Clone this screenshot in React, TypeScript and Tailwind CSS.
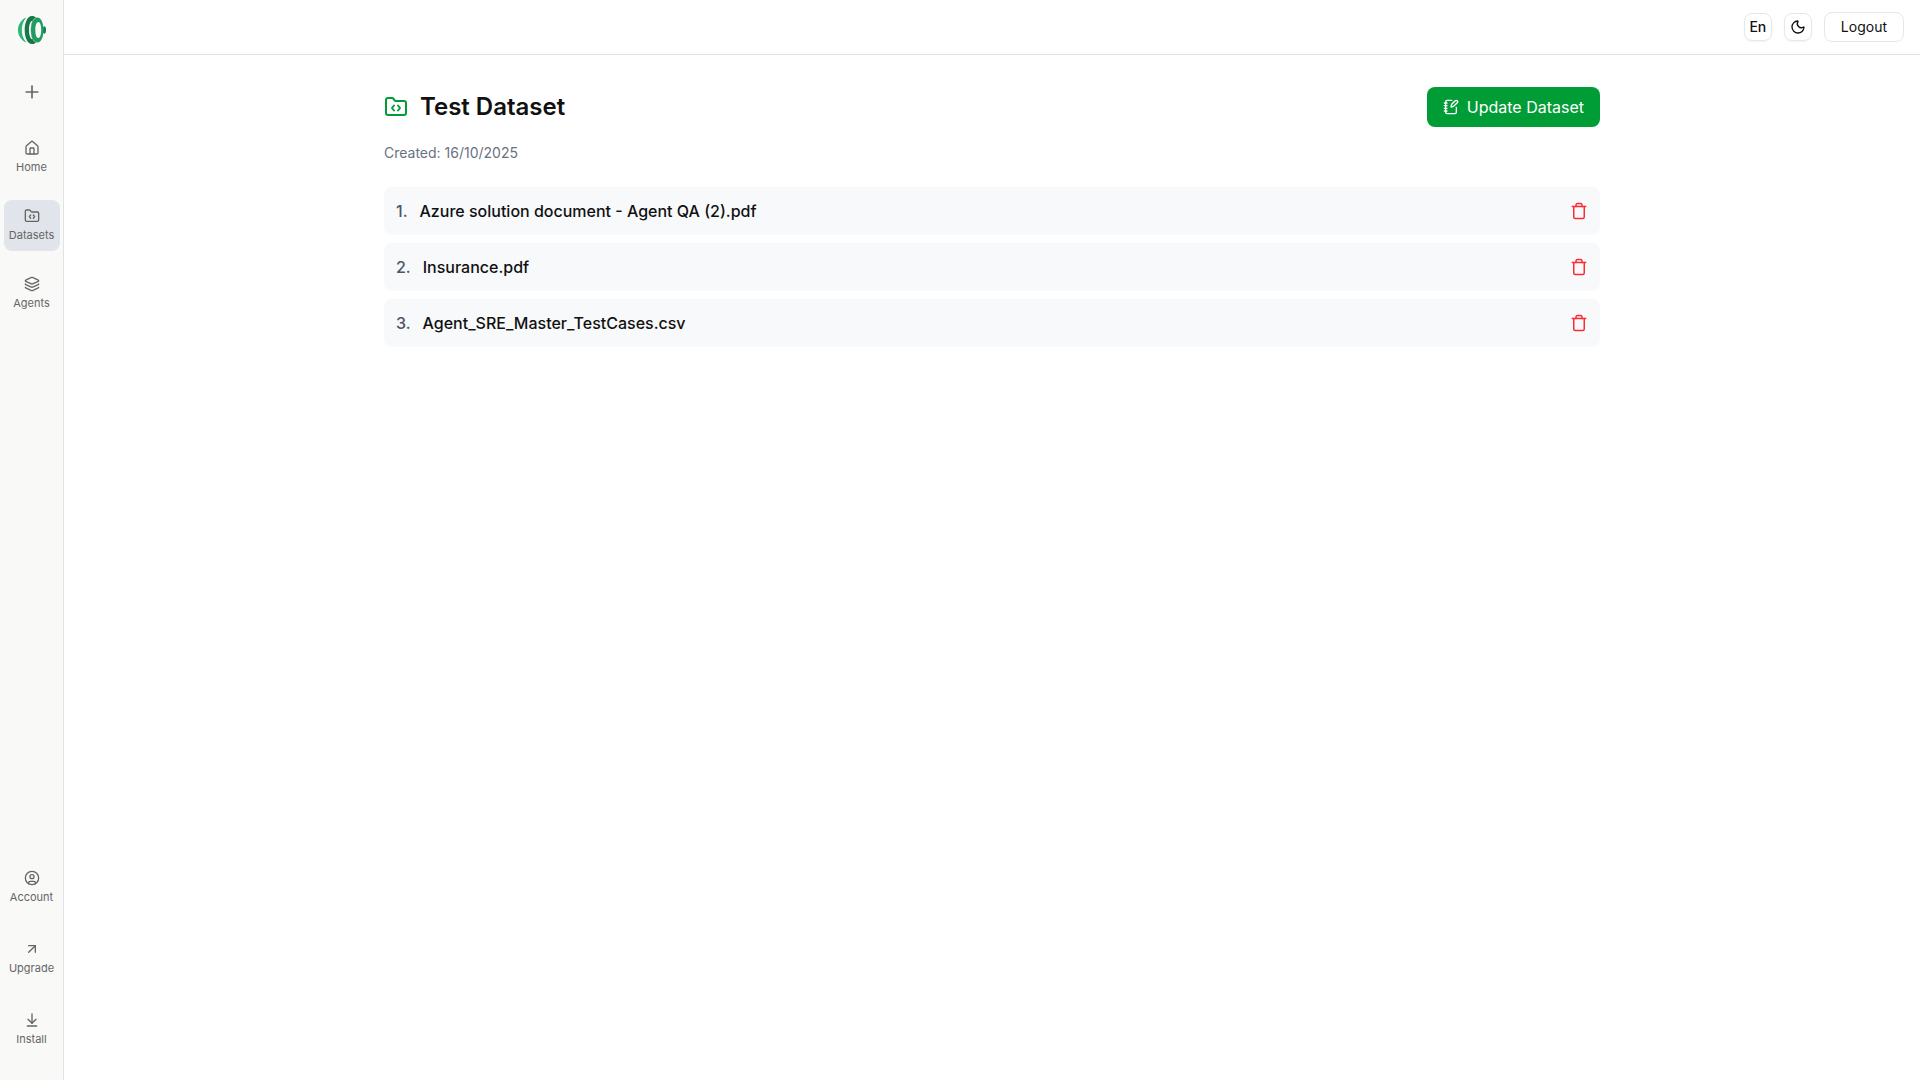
import React from 'react';
import {
  ArrowDownToLine,
  ArrowUpRight,
  CircleUser,
  FolderCode,
  House,
  Layers,
  Moon,
  NotebookPen,
  Plus,
  Trash,
  type LucideIcon,
} from 'lucide-react';

interface NavItem {
  label: string;
  icon: LucideIcon;
  active?: boolean;
}

const mainNav: NavItem[] = [
  { label: 'Home', icon: House },
  { label: 'Datasets', icon: FolderCode, active: true },
  { label: 'Agents', icon: Layers },
];

const bottomNav: NavItem[] = [
  { label: 'Account', icon: CircleUser },
  { label: 'Upgrade', icon: ArrowUpRight },
  { label: 'Install', icon: ArrowDownToLine },
];

const files = [
  'Azure solution document - Agent QA (2).pdf',
  'Insurance.pdf',
  'Agent_SRE_Master_TestCases.csv',
];

const Logo: React.FC = () => (
  <svg viewBox="0 0 28 28" className="w-7 h-7" aria-hidden="true">
    <path d="M8.5 1.2C3.6 3.4 0 8 0 14s3.6 10.6 8.5 12.8C5.2 23 3.8 18.8 3.8 14S5.2 5 8.500 1.200Z" fill="#2bb673" />
    <ellipse cx="26.4" cy="14" rx="1.6" ry="3.8" fill="#17804f" />
    <path
      fillRule="evenodd"
      d="M19.5 1.5c3.800 0 6 5.600 6 12.500s-2.200 12.500-6 12.500-6.500-5.600-6.500-12.500 2.700-12.500 6.500-12.500Zm.8 4.500c-1.800 0-3 3.500-3 8s1.200 8 3 8 2.900-3.500 2.900-8-1.100-8-2.900-8Z"
      fill="#1f9d60"
    />
    <path
      fillRule="evenodd"
      d="M14 0c1.500 0 2.800.5 4 1.500-3.500 1.500-5.200 6.500-5.200 12.500S14.500 25 18 26.500c-1.200 1-2.500 1.500-4 1.500-4.300 0-7.300-6.200-7.300-14S9.700 0 14 0Zm1.200 4.500c-2.700 0-4.200 4-4.200 9.500s1.500 9.500 4.200 9.500c-1.400-2.300-2.200-5.700-2.200-9.500s.8-7.200 2.200-9.500Z"
      fill="#147848"
    />
  </svg>
);

const NavLink: React.FC<{ item: NavItem }> = ({ item }) => {
  const Icon = item.icon;
  return (
    <a
      href="#"
      className={`flex w-14 flex-col items-center gap-1 rounded-lg py-2 text-[11px] leading-[15px] text-[#666666] ${
        item.active ? 'bg-[#e1e4ea]' : ''
      }`}
    >
      <Icon className="w-4 h-4" />
      <span>{item.label}</span>
    </a>
  );
};

const Sidebar: React.FC = () => (
  <aside className="flex w-16 shrink-0 flex-col items-center border-r border-[#e1e1e8] bg-[#f9f9f7] pt-4 pb-[25px]">
    <a href="#" aria-label="Dashboard">
      <Logo />
    </a>
    <button type="button" aria-label="New" className="mt-[38px] text-[#666666]">
      <Plus className="w-5 h-5" />
    </button>
    <nav className="mt-[30px] flex flex-col gap-[17px]">
      {mainNav.map((item) => (
        <NavLink key={item.label} item={item} />
      ))}
    </nav>
    <nav className="mt-auto flex flex-col gap-5">
      {bottomNav.map((item) => (
        <NavLink key={item.label} item={item} />
      ))}
    </nav>
  </aside>
);

const Header: React.FC = () => (
  <header className="flex h-[55px] items-center justify-end gap-3 border-b border-[#e1e1e8] px-4">
    <button type="button" className="h-7 w-7 rounded-lg border border-gray-200 text-sm font-medium shadow-xs">
      En
    </button>
    <button
      type="button"
      aria-label="Toggle theme"
      className="flex h-7 w-7 items-center justify-center rounded-lg border border-gray-200 shadow-xs"
    >
      <Moon className="w-4 h-4" />
    </button>
    <button type="button" className="h-[30px] rounded-lg border border-gray-200 px-4 text-sm">
      Logout
    </button>
  </header>
);

const FileRow: React.FC<{ index: number; name: string }> = ({ index, name }) => (
  <li className="flex items-center justify-between rounded-lg bg-[#f8f9fb] p-3">
    <div className="flex items-center gap-3 font-medium">
      <span className="text-gray-600">{index}.</span>
      <span>{name}</span>
    </div>
    <button type="button" aria-label={`Delete ${name}`} className="text-[#fb2c36]">
      <Trash className="w-[18px] h-[18px]" />
    </button>
  </li>
);

const App: React.FC = () => {
  return (
    <div className="flex min-h-screen bg-white font-['Inter',sans-serif] text-[#111111]">
      <Sidebar />
      <div className="min-w-0 flex-1">
        <Header />
        <main className="mx-auto max-w-7xl p-8">
          <div className="flex items-center justify-between">
            <h1 className="flex items-center gap-3 text-2xl font-semibold [font-optical-sizing:none]">
              <FolderCode className="w-6 h-6 text-[#009c36]" />
              Test Dataset
            </h1>
            <button
              type="button"
              className="flex h-10 items-center gap-2 rounded-lg bg-[#009c36] px-4 text-white"
            >
              <NotebookPen className="w-4 h-4" />
              Update Dataset
            </button>
          </div>
          <p className="mt-4 text-sm text-gray-500">Created: 16/10/2025</p>
          <ul className="mt-6 flex flex-col gap-2">
            {files.map((name, i) => (
              <FileRow key={name} index={i + 1} name={name} />
            ))}
          </ul>
        </main>
      </div>
    </div>
  );
};

export default App;
